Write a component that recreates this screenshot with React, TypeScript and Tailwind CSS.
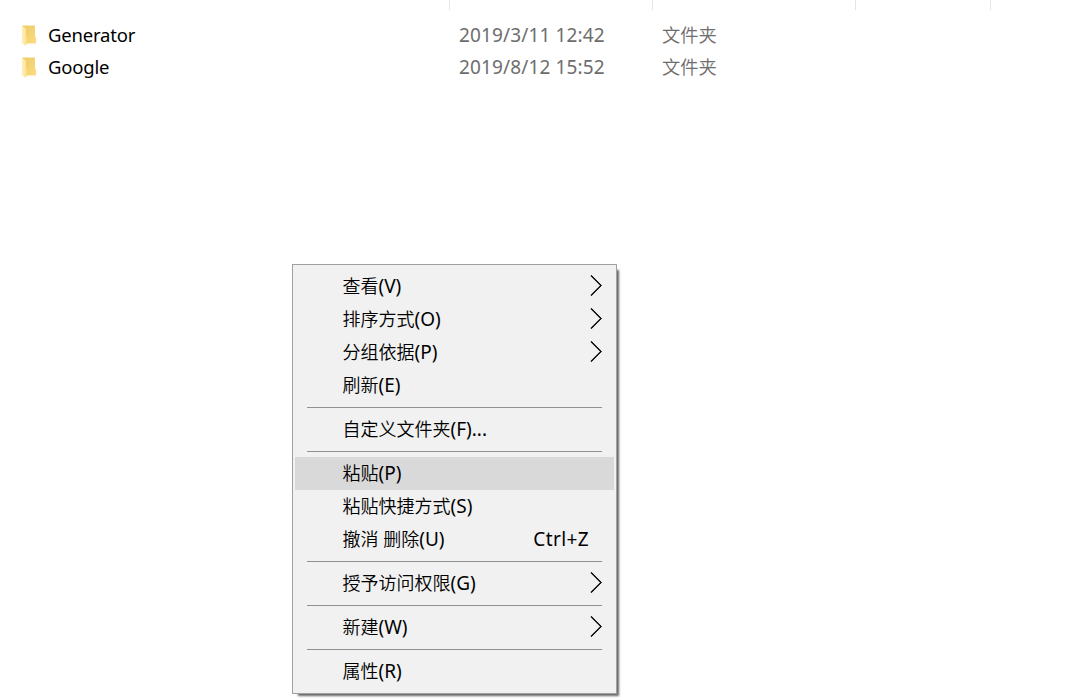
import clsx from "clsx";

interface Entry {
    label: string;
    accel: string;
    shortcut?: string;
    submenu?: boolean;
    active?: boolean;
}

const files = [
    { name: "Generator", modified: "2019/3/11 12:42", type: "文件夹" },
    { name: "Google", modified: "2019/8/12 15:52", type: "文件夹" },
];

const groups: Entry[][] = [
    [
        { label: "查看", accel: "(V)", submenu: true },
        { label: "排序方式", accel: "(O)", submenu: true },
        { label: "分组依据", accel: "(P)", submenu: true },
        { label: "刷新", accel: "(E)" },
    ],
    [{ label: "自定义文件夹", accel: "(F)..." }],
    [
        { label: "粘贴", accel: "(P)", active: true },
        { label: "粘贴快捷方式", accel: "(S)" },
        { label: "撤消 删除", accel: "(U)", shortcut: "Ctrl+Z" },
    ],
    [{ label: "授予访问权限", accel: "(G)", submenu: true }],
    [{ label: "新建", accel: "(W)", submenu: true }],
    [{ label: "属性", accel: "(R)" }],
];

function FolderIcon() {
    return (
        <svg width="16" height="22" viewBox="0 0 16 22" className="mt-0.5 shrink-0" aria-hidden="true">
            <defs>
                <linearGradient id="folder-back" x1="0" y1="0" x2="1" y2="1">
                    <stop offset="0" stopColor="#edca68" />
                    <stop offset="1" stopColor="#fbdc80" />
                </linearGradient>
                <linearGradient id="folder-front" x1="0" y1="0" x2="1" y2="0">
                    <stop offset="0" stopColor="#fff0b8" />
                    <stop offset="1" stopColor="#fde391" />
                </linearGradient>
            </defs>
            <path d="M1 0.5h13V11.5l1 1.5v5.5H5z" fill="url(#folder-back)" />
            <path d="M1 0.5L5 3.5v6l0.5 1V19L5 21L1 18z" fill="url(#folder-front)" />
        </svg>
    );
}

function Chevron() {
    return (
        <svg width="14" height="22" viewBox="0 0 14 22" className="shrink-0" aria-hidden="true">
            <path d="M2 0.5L12 10.5L2 20.5" fill="none" stroke="#f9c697" strokeWidth="1" transform="translate(-0.7 0)" />
            <path d="M2 0.5L12 10.5L2 20.5" fill="none" stroke="#1684c4" strokeWidth="1" transform="translate(0.5 0)" />
            <path d="M2 0.5L12 10.5L2 20.5" fill="none" stroke="#000" strokeWidth="1.1" />
        </svg>
    );
}

function FileList() {
    return (
        <div>
            <div className="flex h-2.5">
                <div className="w-[450px] border-r border-[#e5e5e5]" />
                <div className="w-[203px] border-r border-[#e5e5e5]" />
                <div className="w-[203px] border-r border-[#e5e5e5]" />
                <div className="w-[135px] border-r border-[#e5e5e5]" />
            </div>
            <div className="pt-[9px]">
                {files.map((file) => (
                    <div key={file.name} className="flex h-8 items-center whitespace-nowrap pl-[21px] text-[#6d6d6d]">
                        <FolderIcon />
                        <span className="ml-[11px] w-[411px] text-[18.5px] tracking-[-0.2px] text-black">{file.name}</span>
                        <span className="w-[203px] text-[19px] tracking-[0.13px]">{file.modified}</span>
                        <span className="text-[18.3px] font-[350]">{file.type}</span>
                    </div>
                ))}
            </div>
        </div>
    );
}

function MenuItem({ label, accel, shortcut, submenu, active }: Entry) {
    return (
        <div
            className={clsx(
                "mx-0.5 flex h-[33px] items-center whitespace-nowrap pl-[47.5px]",
                active && "bg-[#d9d9d9]",
            )}
        >
            <span>
                <span className="font-[350]">{label}</span>
                <span className="text-[19px]">{accel}</span>
            </span>
            {shortcut && <span className="ml-auto mr-[25px] text-[19px] tracking-[0.4px]">{shortcut}</span>}
            {submenu && (
                <span className="mb-px ml-auto mr-[11px]">
                    <Chevron />
                </span>
            )}
        </div>
    );
}

function ContextMenu() {
    return (
        <div className="absolute left-[292px] top-[264px] w-[325px] border border-[#a0a0a0] bg-[#f1f1f1] py-[5px] text-[18px] text-black shadow-[4px_4px_2px_-2px_rgba(0,0,0,0.6)]">
            {groups.map((group, i) => (
                <div key={i}>
                    {i > 0 && <div className="mx-3.5 my-[5px] h-px bg-[#919191]" />}
                    {group.map((item) => (
                        <MenuItem key={item.label} {...item} />
                    ))}
                </div>
            ))}
        </div>
    );
}

export default function App() {
    return (
        <div className="relative h-[700px] w-[1073px] overflow-hidden bg-white font-['Noto_Sans','Noto_Sans_CJK_SC',sans-serif] leading-none">
            <FileList />
            <ContextMenu />
        </div>
    );
}
